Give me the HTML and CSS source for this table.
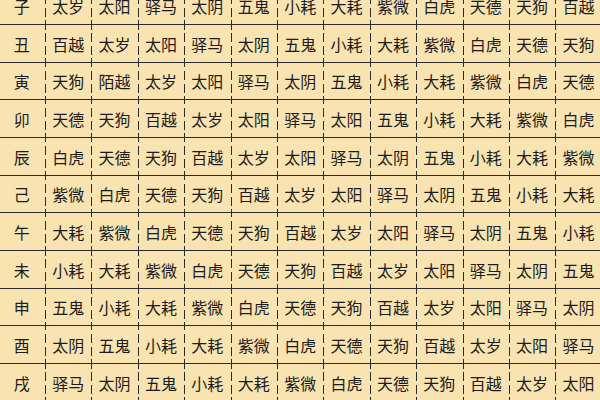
FILE: index.html
```html
<!DOCTYPE html>
<html lang="zh">
<head>
<meta charset="utf-8">
<link rel="stylesheet" href="styles.css">
</head>
<body>
<div class="table">
  <div class="cell label">子</div><div class="cell">太岁</div><div class="cell">太阳</div><div class="cell">驿马</div><div class="cell">太阴</div><div class="cell">五鬼</div><div class="cell">小耗</div><div class="cell">大耗</div><div class="cell">紫微</div><div class="cell">白虎</div><div class="cell">天德</div><div class="cell">天狗</div><div class="cell">百越</div>
  <div class="cell label">丑</div><div class="cell">百越</div><div class="cell">太岁</div><div class="cell">太阳</div><div class="cell">驿马</div><div class="cell">太阴</div><div class="cell">五鬼</div><div class="cell">小耗</div><div class="cell">大耗</div><div class="cell">紫微</div><div class="cell">白虎</div><div class="cell">天德</div><div class="cell">天狗</div>
  <div class="cell label">寅</div><div class="cell">天狗</div><div class="cell">陌越</div><div class="cell">太岁</div><div class="cell">太阳</div><div class="cell">驿马</div><div class="cell">太阴</div><div class="cell">五鬼</div><div class="cell">小耗</div><div class="cell">大耗</div><div class="cell">紫微</div><div class="cell">白虎</div><div class="cell">天德</div>
  <div class="cell label">卯</div><div class="cell">天德</div><div class="cell">天狗</div><div class="cell">百越</div><div class="cell">太岁</div><div class="cell">太阳</div><div class="cell">驿马</div><div class="cell">太阳</div><div class="cell">五鬼</div><div class="cell">小耗</div><div class="cell">大耗</div><div class="cell">紫微</div><div class="cell">白虎</div>
  <div class="cell label">辰</div><div class="cell">白虎</div><div class="cell">天德</div><div class="cell">天狗</div><div class="cell">百越</div><div class="cell">太岁</div><div class="cell">太阳</div><div class="cell">驿马</div><div class="cell">太阴</div><div class="cell">五鬼</div><div class="cell">小耗</div><div class="cell">大耗</div><div class="cell">紫微</div>
  <div class="cell label">己</div><div class="cell">紫微</div><div class="cell">白虎</div><div class="cell">天德</div><div class="cell">天狗</div><div class="cell">百越</div><div class="cell">太岁</div><div class="cell">太阳</div><div class="cell">驿马</div><div class="cell">太阴</div><div class="cell">五鬼</div><div class="cell">小耗</div><div class="cell">大耗</div>
  <div class="cell label">午</div><div class="cell">大耗</div><div class="cell">紫微</div><div class="cell">白虎</div><div class="cell">天德</div><div class="cell">天狗</div><div class="cell">百越</div><div class="cell">太岁</div><div class="cell">太阳</div><div class="cell">驿马</div><div class="cell">太阴</div><div class="cell">五鬼</div><div class="cell">小耗</div>
  <div class="cell label">未</div><div class="cell">小耗</div><div class="cell">大耗</div><div class="cell">紫微</div><div class="cell">白虎</div><div class="cell">天德</div><div class="cell">天狗</div><div class="cell">百越</div><div class="cell">太岁</div><div class="cell">太阳</div><div class="cell">驿马</div><div class="cell">太阴</div><div class="cell">五鬼</div>
  <div class="cell label">申</div><div class="cell">五鬼</div><div class="cell">小耗</div><div class="cell">大耗</div><div class="cell">紫微</div><div class="cell">白虎</div><div class="cell">天德</div><div class="cell">天狗</div><div class="cell">百越</div><div class="cell">太岁</div><div class="cell">太阳</div><div class="cell">驿马</div><div class="cell">太阴</div>
  <div class="cell label">酉</div><div class="cell">太阴</div><div class="cell">五鬼</div><div class="cell">小耗</div><div class="cell">大耗</div><div class="cell">紫微</div><div class="cell">白虎</div><div class="cell">天德</div><div class="cell">天狗</div><div class="cell">百越</div><div class="cell">太岁</div><div class="cell">太阳</div><div class="cell">驿马</div>
  <div class="cell label">戌</div><div class="cell">驿马</div><div class="cell">太阴</div><div class="cell">五鬼</div><div class="cell">小耗</div><div class="cell">大耗</div><div class="cell">紫微</div><div class="cell">白虎</div><div class="cell">天德</div><div class="cell">天狗</div><div class="cell">百越</div><div class="cell">太岁</div><div class="cell">太阳</div>
</div>
</body>
</html>
```
FILE: styles.css
```css
html, body {
  margin: 0;
  padding: 0;
  width: 600px;
  height: 400px;
  overflow: hidden;
  background: #f9e3b0;
}
.table {
  display: grid;
  grid-template-columns: repeat(13, 46.4px);
  grid-auto-rows: 37.67px;
  margin-top: -12.67px;
  margin-left: -1.4px;
  width: 610px;
}
.cell {
  box-sizing: border-box;
  border-bottom: 1px solid #2b2b2b;
  display: flex;
  align-items: center;
  justify-content: center;
  font-family: "Noto Sans CJK SC", "Noto Sans", sans-serif;
  font-size: 16px;
  color: #1c1c1c;
  padding-top: 1px;
  background-image: repeating-linear-gradient(to bottom, #2b2b2b 0 4.5px, transparent 4.5px 8.06px, #2b2b2b 8.06px 12.56px);
  background-size: 1px 100%;
  background-repeat: no-repeat;
  background-position: 0 0;
}
.cell.label {
  background-image: none;
}
```
